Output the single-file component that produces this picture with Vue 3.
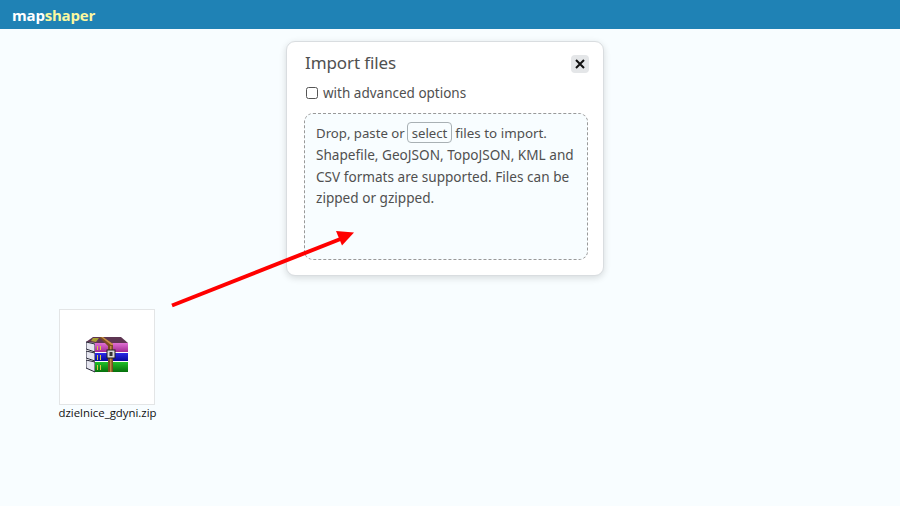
<script setup>
const lines = [
  'Shapefile, GeoJSON, TopoJSON, KML and',
  'CSV formats are supported. Files can be',
  'zipped or gzipped.'
]
</script>

<template>
  <div class="page">
    <header class="bar">
      <span class="logo">map<span class="logo-accent">shaper</span></span>
    </header>
    <main class="stage">
      <section class="popup">
        <div class="head">
          <h1 class="title">Import files</h1>
          <button class="close" type="button" aria-label="Close">
            <svg width="10" height="10" viewBox="0 0 10 10"><path d="M1 1l8 8M9 1l-8 8" stroke="#111" stroke-width="2" fill="none"/></svg>
          </button>
        </div>
        <label class="advanced">
          <input class="check" type="checkbox" />
          <span>with advanced options</span>
        </label>
        <div class="drop">
          <div class="line first">Drop, paste or <span class="select">select</span> <span class="rest">files to import.</span></div>
          <div v-for="l in lines" :key="l" class="line">{{ l }}</div>
        </div>
      </section>
    </main>

    <figure class="file">
      <div class="thumb">
        <svg width="42" height="36" viewBox="0 0 42 36">
          <defs>
            <linearGradient id="band1" x1="0" y1="0" x2="0" y2="1"><stop offset="0" stop-color="#e070d4"/><stop offset="1" stop-color="#a02890"/></linearGradient>
            <linearGradient id="band2" x1="0" y1="0" x2="0" y2="1"><stop offset="0" stop-color="#2a2ae8"/><stop offset="1" stop-color="#08089a"/></linearGradient>
            <linearGradient id="band3" x1="0" y1="0" x2="0" y2="1"><stop offset="0" stop-color="#20c028"/><stop offset="1" stop-color="#06700c"/></linearGradient>
          </defs>
          <path d="M0 5L7 0H35L42 6H9z" fill="#5e3552"/>
          <path d="M7 1L13 1 10 5 5 4z" fill="#a8a030"/>
          <path d="M0 5l9 2v8L0 12z" fill="#e6e6f0" stroke="#112" stroke-width=".9"/>
          <path d="M0 14l9 2v8L0 21z" fill="#e6e6f0" stroke="#112" stroke-width=".9"/>
          <path d="M0 23l9 2v10L0 31z" fill="#e6e6f0" stroke="#112" stroke-width=".9"/>
          <rect x="9" y="6" width="33" height="9" fill="url(#band1)"/>
          <rect x="9" y="16" width="33" height="8" fill="url(#band2)"/>
          <rect x="9" y="25" width="33" height="10" fill="url(#band3)"/>
          <path d="M11 9h1v4h-1zM14 9h1v4h-1zM11 18h1v5h-1zM14 18h1v5h-1zM11 28h1v5h-1zM14 28h1v5h-1z" fill="#d8c840"/>
          <path d="M13 0h4l10 7v28h-5V9z" fill="#7a4c20"/>
          <path d="M15 0h2l10 7v1h-2z" fill="#c89048"/>
          <rect x="24" y="9" width="1.500" height="26" fill="#c08a44"/>
          <rect x="21" y="13" width="8" height="8" fill="#d8d8d8" stroke="#222"/>
          <rect x="23.500" y="15" width="3" height="4" fill="#333"/>
        </svg>
      </div>
      <figcaption class="caption">dzielnice_gdyni.zip</figcaption>
    </figure>

    <svg class="arrow" width="190" height="80" viewBox="0 0 190 80">
      <path d="M1 75.500L172 8" stroke="#ff0000" stroke-width="4" fill="none"/>
      <path d="M183 2.500L165 1L171 15.500z" fill="#ff0000"/>
    </svg>
  </div>
</template>

<style scoped>
.page {
  position: relative;
  width: 900px;
  height: 506px;
  overflow: hidden;
  background: #f8fdff;
  font-family: "Noto Sans", "Liberation Sans", sans-serif;
  color: #505050;
}
.bar {
  height: 29px;
  background: #1f82b5;
  display: flex;
  align-items: center;
  padding-left: 12px;
  box-sizing: border-box;
}
.logo {
  font-family: "Open Sans", "Noto Sans", sans-serif;
  font-weight: 700;
  font-size: 15px;
  color: #fff;
  letter-spacing: -0.2px;
}
.logo-accent { color: #fbf8a0; }
.stage {
  padding: 12px 0 0 286px;
}
.popup {
  width: 318px;
  height: 235px;
  box-sizing: border-box;
  background: #fff;
  border: 1px solid #d9dde0;
  border-radius: 9px;
  box-shadow: 0 2px 7px rgba(0, 0, 0, 0.14);
  padding: 9px 15px 15px 17px;
}
.head {
  display: flex;
  justify-content: space-between;
  align-items: flex-start;
  padding-left: 1px;
}
.title {
  margin: 0;
  font-weight: 400;
  font-size: 17px;
  line-height: 24px;
  letter-spacing: -0.1px;
  color: #505050;
}
.close {
  width: 18px;
  height: 18px;
  margin-top: 4px;
  margin-right: -1px;
  padding: 0;
  border: 0;
  border-radius: 4px;
  background: #e4e6e8;
  display: flex;
  align-items: center;
  justify-content: center;
}
.advanced {
  display: flex;
  align-items: center;
  gap: 5px;
  margin-top: 8px;
  margin-left: 2px;
  height: 20px;
  font-size: 13.5px;
}
.check {
  width: 12px;
  height: 12px;
  margin: 0;
  appearance: none;
  background: #fff;
  border: 1px solid #555;
  border-radius: 2.5px;
}
.drop {
  margin-top: 10px;
  height: 147px;
  box-sizing: border-box;
  background: #f8fdff;
  border: 1px dashed #999;
  border-radius: 9px;
  padding: 8px 10px 0 11px;
  font-size: 13.6px;
  line-height: 22px;
}
.line { white-space: nowrap; height: 21.7px; }
.line.first { font-size: 13.2px; height: 22px; line-height: 23px; }
.rest { font-size: 13.4px; }
.select {
  display: inline-block;
  box-sizing: border-box;
  height: 21px;
  line-height: 20px;
  padding: 0 3.5px;
  margin-left: -1px;
  border: 1px solid #a8b0b4;
  border-radius: 4px;
  vertical-align: top;
  background: #f8fdff;
}
.file {
  position: absolute;
  left: 55px;
  top: 309px;
  width: 105px;
  margin: 0;
}
.thumb {
  width: 96px;
  height: 96px;
  margin-left: 4px;
  box-sizing: border-box;
  background: #fff;
  border: 1px solid #e3e5e6;
  display: flex;
  align-items: center;
  justify-content: center;
  padding-bottom: 5px;
}
.caption {
  font-family: "Open Sans", "Noto Sans", sans-serif;
  font-size: 11.4px;
  line-height: 16px;
  color: #111;
  text-align: center;
  white-space: nowrap;
}
.arrow {
  position: absolute;
  left: 171px;
  top: 230px;
}
</style>
